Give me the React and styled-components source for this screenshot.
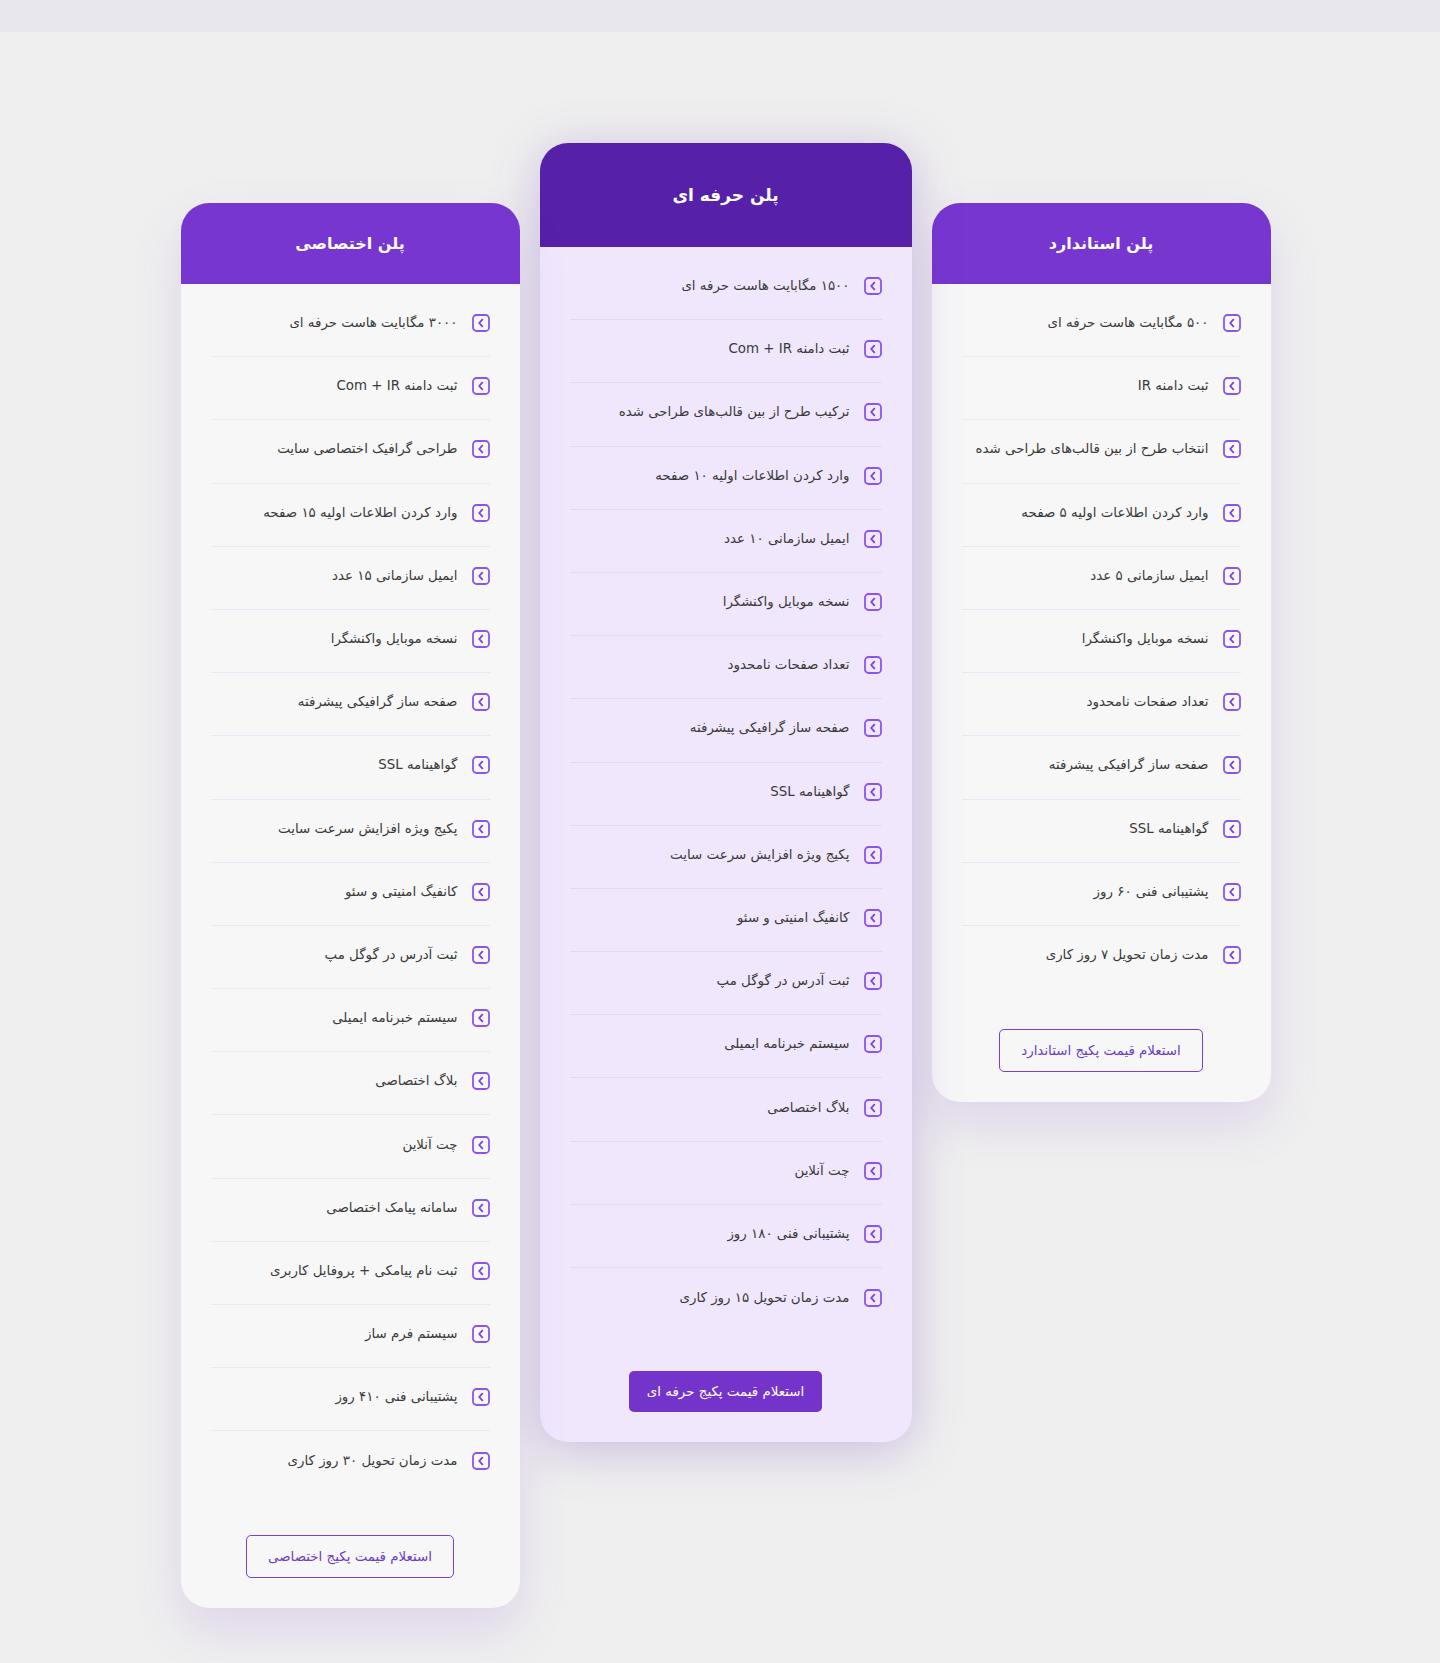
import React from "react";
import styled, { createGlobalStyle } from "styled-components";

const Global = createGlobalStyle`
  html, body { margin: 0; padding: 0; background: #efefef; }
  body { font-family: "DejaVu Sans", "Noto Sans", sans-serif; min-height: 1663px; }
  * { box-sizing: border-box; }
`;

const TopBand = styled.div`
  height: 32px;
  background: #e8e7ed;
`;

const Page = styled.main`
  min-height: 1631px;
  background: #efefef;
  padding: 111px 0 56px 11px;
`;

const Plans = styled.div`
  direction: rtl;
  display: flex;
  justify-content: center;
  align-items: flex-start;
  gap: 20px;
`;

const Card = styled.section`
  width: ${(p) => (p.$featured ? "372px" : "339px")};
  margin-top: ${(p) => (p.$featured ? "0" : "60px")};
  border-radius: 28px;
  overflow: hidden;
  background: ${(p) => (p.$featured ? "#f0e7fd" : "#f7f7f7")};
  box-shadow: ${(p) =>
    p.$featured
      ? "0 8px 50px rgba(96, 40, 180, 0.26)"
      : "0 22px 50px rgba(118, 54, 207, 0.14)"};
  display: flex;
  flex-direction: column;
`;

const Header = styled.header`
  height: ${(p) => (p.$featured ? "104px" : "81px")};
  background: ${(p) => (p.$featured ? "#5720a8" : "#7636cf")};
  color: #ffffff;
  display: flex;
  align-items: center;
  justify-content: center;
  font-size: ${(p) => (p.$featured ? "17px" : "16px")};
  font-weight: 700;
`;

const Body = styled.div`
  padding: 10px 30px 30px;
  display: flex;
  flex-direction: column;
  align-items: stretch;
`;

const List = styled.ul`
  list-style: none;
  margin: 0 0 40px;
  padding: 0;
`;

const Item = styled.li`
  display: flex;
  align-items: center;
  gap: 14px;
  height: 63.2px;
  padding: 17px 0 21px;
  line-height: 24px;
  border-bottom: 1px solid ${(p) => (p.$featured ? "#e2d6fb" : "#ebe6f7")};
  font-size: 13.4px;
  color: #3a3a3a;
  white-space: nowrap;
  &:last-child { border-bottom: none; }
`;

const IconBox = styled.span`
  flex: none;
  display: flex;
  width: 18px;
  height: 18px;
`;

const Button = styled.button`
  align-self: center;
  font-family: inherit;
  font-size: 13.4px;
  height: ${(p) => (p.$featured ? "41px" : "43px")};
  padding: 0 ${(p) => (p.$featured ? "18px" : "21px")};
  border-radius: 5px;
  cursor: pointer;
  border: ${(p) => (p.$featured ? "none" : "1.5px solid #7b3fd6")};
  background: ${(p) => (p.$featured ? "#7434cc" : "transparent")};
  color: ${(p) => (p.$featured ? "#ffffff" : "#6b3cc4")};
  font-weight: 400;
`;

const Chevron = () => (
  <IconBox>
    <svg width="18" height="18" viewBox="0 0 18 18" fill="none">
      <rect x="1" y="1" width="16" height="16" rx="3.5" stroke="#8a55ef" strokeWidth="1.8" />
      <polyline points="10.3,5.6 7.2,9 10.3,12.4" stroke="#7b3fe0" strokeWidth="1.8" strokeLinecap="round" strokeLinejoin="round" />
    </svg>
  </IconBox>
);

const plans = [
  {
    title: "پلن استاندارد",
    button: "استعلام قیمت پکیج استاندارد",
    items: [
      "۵۰۰ مگابایت هاست حرفه ای",
      "ثبت دامنه IR",
      "انتخاب طرح از بین قالب‌های طراحی شده",
      "وارد کردن اطلاعات اولیه ۵ صفحه",
      "ایمیل سازمانی ۵ عدد",
      "نسخه موبایل واکنشگرا",
      "تعداد صفحات نامحدود",
      "صفحه ساز گرافیکی پیشرفته",
      "گواهینامه SSL",
      "پشتیبانی فنی ۶۰ روز",
      "مدت زمان تحویل ۷ روز کاری",
    ],
  },
  {
    title: "پلن حرفه ای",
    button: "استعلام قیمت پکیج حرفه ای",
    featured: true,
    items: [
      "۱۵۰۰ مگابایت هاست حرفه ای",
      "ثبت دامنه Com + IR",
      "ترکیب طرح از بین قالب‌های طراحی شده",
      "وارد کردن اطلاعات اولیه ۱۰ صفحه",
      "ایمیل سازمانی ۱۰ عدد",
      "نسخه موبایل واکنشگرا",
      "تعداد صفحات نامحدود",
      "صفحه ساز گرافیکی پیشرفته",
      "گواهینامه SSL",
      "پکیج ویژه افزایش سرعت سایت",
      "کانفیگ امنیتی و سئو",
      "ثبت آدرس در گوگل مپ",
      "سیستم خبرنامه ایمیلی",
      "بلاگ اختصاصی",
      "چت آنلاین",
      "پشتیبانی فنی ۱۸۰ روز",
      "مدت زمان تحویل ۱۵ روز کاری",
    ],
  },
  {
    title: "پلن اختصاصی",
    button: "استعلام قیمت پکیج اختصاصی",
    items: [
      "۳۰۰۰ مگابایت هاست حرفه ای",
      "ثبت دامنه Com + IR",
      "طراحی گرافیک اختصاصی سایت",
      "وارد کردن اطلاعات اولیه ۱۵ صفحه",
      "ایمیل سازمانی ۱۵ عدد",
      "نسخه موبایل واکنشگرا",
      "صفحه ساز گرافیکی پیشرفته",
      "گواهینامه SSL",
      "پکیج ویژه افزایش سرعت سایت",
      "کانفیگ امنیتی و سئو",
      "ثبت آدرس در گوگل مپ",
      "سیستم خبرنامه ایمیلی",
      "بلاگ اختصاصی",
      "چت آنلاین",
      "سامانه پیامک اختصاصی",
      "ثبت نام پیامکی + پروفایل کاربری",
      "سیستم فرم ساز",
      "پشتیبانی فنی ۴۱۰ روز",
      "مدت زمان تحویل ۳۰ روز کاری",
    ],
  },
];

export default function App() {
  return (
    <>
      <Global />
      <TopBand />
      <Page>
        <Plans>
          {plans.map((plan) => (
            <Card key={plan.title} $featured={plan.featured}>
              <Header $featured={plan.featured}>{plan.title}</Header>
              <Body>
                <List>
                  {plan.items.map((it) => (
                    <Item key={it} $featured={plan.featured}>
                      <Chevron />
                      <span>{it}</span>
                    </Item>
                  ))}
                </List>
                <Button $featured={plan.featured}>{plan.button}</Button>
              </Body>
            </Card>
          ))}
        </Plans>
      </Page>
    </>
  );
}
